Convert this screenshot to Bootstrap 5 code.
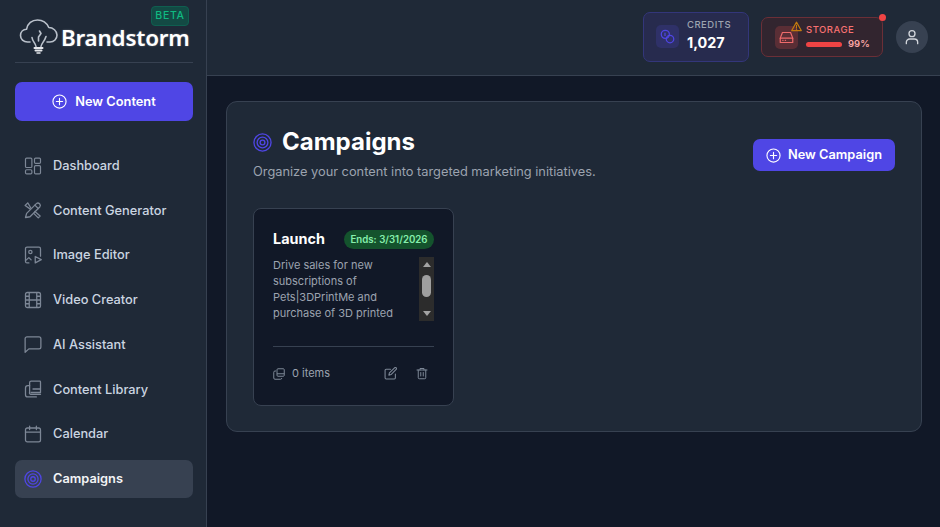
<!DOCTYPE html>
<html lang="en">
<head>
<meta charset="utf-8">
<title>Campaigns</title>
<link href="https://cdn.jsdelivr.net/npm/bootstrap@5.3.0/dist/css/bootstrap.min.css" rel="stylesheet">
<style>
html,body{height:100%;margin:0}
body{background:#111827;font-family:Inter,"Liberation Sans",sans-serif;overflow:hidden}
svg{display:block;flex:none}
.app-shell{height:527px}
.side{width:207px;flex:none;background:#1f2937;border-right:1px solid #374151;padding:0 13px 0 15px}
.brand-box{height:63px;border-bottom:1px solid #374151;position:relative;padding:17px 0 0 4px;color:#fff}
.brand-name{font-family:"Noto Sans","Open Sans",sans-serif;font-weight:600;font-size:22.400px;line-height:28px;letter-spacing:-.2px;margin-left:2px;margin-top:7px;text-shadow:0 0 2px rgba(255,255,255,.35)}
.beta-tag{position:absolute;right:4px;top:6px;width:38px;height:20px;border:1px solid #0f5f50;background:#134a44;color:#10b981;border-radius:4px;font-size:10.500px;font-weight:500;letter-spacing:.7px;line-height:18px;text-align:center}
.cta{background:#4f46e5;color:#fff;border:0;font-weight:600;display:flex;align-items:center;justify-content:center}
.cta:hover{background:#4f46e5;color:#fff}
.cta-side{width:100%;height:39px;margin-top:19px;margin-bottom:25.550px;border-radius:7px;font-size:12.800px;gap:8px}
.side-links{gap:6.720px}
.side-link{height:38px;border-radius:7px;padding:0 10px 0 9px;color:#cbd5e1;font-size:12.800px;font-weight:500;display:flex;align-items:center;gap:11px;text-decoration:none}
.side-link svg{color:#7d8796}
.side-link.on{background:#374151;color:#f3f4f6;font-weight:600}
.side-link.on svg{color:#4f46e5}
.topbar{height:76px;background:#1f2937;border-bottom:1px solid #374151;padding-right:12px;gap:13px}
.stat{display:flex;align-items:center;border-radius:7px}
.stat-credits{width:106px;height:50px;margin-top:-1px;background:#272b4e;border:1px solid #33367a;padding:0 0 2px 12px;gap:8px}
.stat-store{width:122px;height:40px;margin-left:-1px;margin-top:-1px;background:#32252f;border:1px solid #6b2f37;padding-left:13px;gap:8px;position:relative}
.stat-ico{width:23px;height:23px;border-radius:5px;display:flex;align-items:center;justify-content:center}
.stat-credits .stat-ico{background:#2f3168;color:#4f46e5}
.stat-store .stat-ico{background:#5a2e35;color:#ef6b6b}
.stat-label{font-size:9.500px;letter-spacing:.5px;line-height:12px;color:#9ca3af;font-weight:500}
.stat-value{font-size:14.400px;line-height:20px;color:#fff;font-weight:700;margin-top:2px}
.store-label{color:#f87171}
.store-row{gap:6px;margin-top:2px}
.store-bar{width:36px;height:5px;border-radius:3px;background:#ef4444}
.store-pct{font-size:9.500px;line-height:12px;font-weight:600;color:#fca5a5}
.warn-pin{position:absolute;left:29px;top:3px}
.red-dot{position:absolute;right:-4px;top:-4px;width:7px;height:7px;border-radius:50%;background:#ef4444}
.avatar-dot{width:32px;height:32px;border-radius:50%;background:#374151;color:#d1d5db;display:flex;align-items:center;justify-content:center;margin-top:-1px}
.main-pane{padding:25px 18px 0 19px}
.panel{height:331px;background:#1f2937;border:1px solid #374151;border-radius:11px;padding:25px 26px 0}
.page-title{font-size:24px;line-height:30px;font-weight:700;color:#fff;margin:0}
.page-sub{font-size:12.800px;line-height:18px;color:#9ca3af;margin-top:6px}
.cta-page{height:32px;width:142px;margin-top:12px;border-radius:7px;font-size:12.800px;gap:7px}
.camp-card{width:201px;height:198px;margin-top:27px;background:#111827;border:1px solid #374151;border-radius:8px;padding:19px 19px 0}
.camp-name{font-size:14.400px;line-height:22px;font-weight:700;color:#fff}
.ends-tag{height:19px;width:90px;border-radius:10px;background:#14532d;color:#86efac;font-size:9.700px;font-weight:600;line-height:19px;text-align:center}
.camp-desc{height:64px;margin-top:7px;font-size:11px;line-height:16px;color:#9ca3af;width:131px}
.fake-scroll{width:15px;height:64px;margin-top:7px;background:#2c2c2c;position:relative;display:flex;flex-direction:column;align-items:center;justify-content:space-between;padding:5px 0}
.fake-thumb{position:absolute;left:3px;top:18px;width:9px;height:22px;border-radius:5px;background:#9f9f9f}
.tri-up{width:0;height:0;border-left:4.500px solid transparent;border-right:4.500px solid transparent;border-bottom:5px solid #a3a3a3}
.tri-down{width:0;height:0;border-left:4.500px solid transparent;border-right:4.500px solid transparent;border-top:5px solid #a3a3a3}
.card-rule{border-top:1px solid #374151;margin-top:25px}
.camp-foot{height:53px;color:#9ca3af;font-size:11px}
.foot-ico{color:#7d8796}
.foot-left{gap:7px}
.foot-right{gap:19px;padding-right:6px}
.page-head{gap:10px}
</style>
</head>
<body>
<div class="d-flex app-shell">
  <aside class="side d-flex flex-column">
    <div class="brand-box d-flex align-items-start">
      <svg width="40" height="38" viewBox="0 0 40 38" fill="none" stroke="#b9c0ca" stroke-width="1.600" stroke-linecap="round" stroke-linejoin="round"><path d="M11 25H8.500C4.500 25 1.500 22 1.500 18.500C1.500 15 4.200 12.500 7.500 12.300C8.500 6.500 13 3 18.500 3C24 3 28 6.500 29.800 10.500C34 10.500 38 14 38 18C38 22 35 25 31 25H28"/><path d="M17 29.500C16.500 26 13.500 24.500 13 20.500M22 29.500C22.500 26 25.500 24.500 27 19.500M19.500 24V20L22 16.500L20.500 14"/><path d="M15.500 31H23.500M16.500 33.500H22.500" stroke="#e5e7eb" stroke-width="2"/><path d="M18 36H21" stroke="#e5e7eb" stroke-width="1.500"/></svg>
      <span class="brand-name">Brandstorm</span>
      <span class="beta-tag">BETA</span>
    </div>
    <button class="btn cta cta-side" type="button">
      <svg width="15" height="15" viewBox="0 0 24 24" fill="none" stroke="currentColor" stroke-width="1.800" stroke-linecap="round"><circle cx="12" cy="12" r="10.500"/><path d="M12 7v10M7 12h10"/></svg>
      New Content
    </button>
    <nav class="d-flex flex-column side-links">
      <a class="side-link" href="#"><svg width="18" height="18" viewBox="0 0 24 24" fill="none" stroke="currentColor" stroke-width="1.600" stroke-linejoin="round"><rect x="2" y="1.500" width="8.500" height="12.500" rx="1.500"/><rect x="14" y="1.500" width="8" height="7" rx="1.500"/><rect x="2" y="17" width="8.500" height="5.500" rx="1.500"/><rect x="14" y="11.500" width="8" height="11" rx="1.500"/></svg>Dashboard</a>
      <a class="side-link" href="#"><svg width="18" height="18" viewBox="0 0 24 24" fill="none" stroke="currentColor" stroke-width="1.700" stroke-linecap="round" stroke-linejoin="round"><path d="M2 22l1.500-5.500L16.500 3.500a3.200 3.200 0 0 1 4.500 4.500L8 21z"/><path d="M14.500 5.500l4.500 4.500"/><path d="M9 9L5 2.500 1.500 6 8 10.500M14.500 14l7 6-2.500 2.500-6-6"/></svg>Content Generator</a>
      <a class="side-link" href="#"><svg width="18" height="18" viewBox="0 0 24 24" fill="none" stroke="currentColor" stroke-width="1.700" stroke-linecap="round" stroke-linejoin="round"><path d="M6.500 22.500H4a2 2 0 0 1-2-2V3.500a2 2 0 0 1 2-2h16a2 2 0 0 1 2 2v10"/><circle cx="8.500" cy="8" r="2.200"/><path d="M2 19.500l4.500-4 3 3"/><path d="M15 14l8 4.200-8 4.300z"/></svg>Image Editor</a>
      <a class="side-link" href="#"><svg width="18" height="18" viewBox="0 0 24 24" fill="none" stroke="currentColor" stroke-width="1.700" stroke-linejoin="round"><rect x="2" y="2" width="20" height="20" rx="2.500"/><path d="M7 2v20M17 2v20M2 7h5M2 12h20M2 17h5M17 7h5M17 17h5"/></svg>Video Creator</a>
      <a class="side-link" href="#"><svg width="18" height="18" viewBox="0 0 24 24" fill="none" stroke="currentColor" stroke-width="1.700" stroke-linejoin="round"><path d="M1.500 5A2.500 2.500 0 0 1 4 2.500h16A2.500 2.500 0 0 1 22.500 5v11a2.500 2.500 0 0 1-2.500 2.500H6.500l-5 4.500z"/></svg>AI Assistant</a>
      <a class="side-link" href="#"><svg width="18" height="18" viewBox="0 0 24 24" fill="none" stroke="currentColor" stroke-width="1.700" stroke-linecap="round" stroke-linejoin="round"><path d="M7.500 16V3.500a2 2 0 0 1 2-2H21a1 1 0 0 1 1 1V16.500H9.500"/><path d="M12 12h10"/><path d="M7.500 7.500H5a3 3 0 0 0-3 3v9a3 3 0 0 0 3 3h11.500"/><path d="M7.500 16a2 2 0 0 0 2 3H22"/></svg>Content Library</a>
      <a class="side-link" href="#"><svg width="18" height="18" viewBox="0 0 24 24" fill="none" stroke="currentColor" stroke-width="1.700" stroke-linecap="round" stroke-linejoin="round"><rect x="2" y="4" width="20" height="18.500" rx="2.500"/><path d="M2 9.500h20M7.500 1.500V6M16.500 1.500V6"/></svg>Calendar</a>
      <a class="side-link on" href="#"><svg width="18" height="18" viewBox="0 0 24 24" fill="none" stroke="currentColor" stroke-width="1.700"><circle cx="12" cy="12" r="10.800"/><circle cx="12" cy="12" r="6.800"/><circle cx="12" cy="12" r="3"/></svg>Campaigns</a>
    </nav>
  </aside>
  <div class="flex-grow-1 d-flex flex-column">
    <header class="topbar d-flex align-items-center justify-content-end">
      <div class="stat stat-credits">
        <div class="stat-ico"><svg width="15" height="15" viewBox="0 0 24 24" fill="none" stroke="currentColor" stroke-width="2"><circle cx="8.500" cy="8.500" r="6.500"/><circle cx="16" cy="16" r="6"/><path d="M8 6v5"/></svg></div>
        <div><div class="stat-label">CREDITS</div><div class="stat-value">1,027</div></div>
      </div>
      <div class="stat stat-store">
        <svg class="warn-pin" width="11" height="11" viewBox="0 0 24 24" fill="none" stroke="#c27a0e" stroke-width="2.400" stroke-linejoin="round" stroke-linecap="round"><path d="M12 2.500L22.500 21h-21z"/><path d="M12 9v6M12 18v.2"/></svg>
        <div class="stat-ico"><svg width="15" height="15" viewBox="0 0 24 24" fill="none" stroke="currentColor" stroke-width="1.900" stroke-linejoin="round" stroke-linecap="round"><path d="M2 13L5.500 4h13L22 13v7H2z"/><path d="M2 13h20M6 16.500h.5M10 16.500h.5"/></svg></div>
        <div>
          <div class="stat-label store-label">STORAGE</div>
          <div class="d-flex align-items-center store-row"><div class="store-bar"></div><div class="store-pct">99%</div></div>
        </div>
        <span class="red-dot"></span>
      </div>
      <div class="avatar-dot"><svg width="16" height="16" viewBox="0 0 24 24" fill="none" stroke="currentColor" stroke-width="2" stroke-linecap="round"><circle cx="12" cy="7" r="4.500"/><path d="M3.500 22v-2a5 5 0 0 1 5-5h7a5 5 0 0 1 5 5v2"/></svg></div>
    </header>
    <main class="main-pane flex-grow-1">
      <section class="panel">
        <div class="d-flex justify-content-between align-items-start">
          <div>
            <div class="d-flex align-items-center page-head">
              <svg width="19" height="19" viewBox="0 0 24 24" fill="none" stroke="#4f46e5" stroke-width="1.700"><circle cx="12" cy="12" r="10.800"/><circle cx="12" cy="12" r="6.800"/><circle cx="12" cy="12" r="3"/></svg>
              <h1 class="page-title">Campaigns</h1>
            </div>
            <div class="page-sub">Organize your content into targeted marketing initiatives.</div>
          </div>
          <button class="btn cta cta-page" type="button">
            <svg width="15" height="15" viewBox="0 0 24 24" fill="none" stroke="currentColor" stroke-width="1.800" stroke-linecap="round"><circle cx="12" cy="12" r="10.500"/><path d="M12 7v10M7 12h10"/></svg>
            New Campaign
          </button>
        </div>
        <article class="camp-card">
          <div class="d-flex justify-content-between align-items-center">
            <div class="camp-name">Launch</div>
            <div class="ends-tag">Ends: 3/31/2026</div>
          </div>
          <div class="d-flex justify-content-between">
            <div class="camp-desc">Drive sales for new subscriptions of Pets|3DPrintMe and purchase of 3D printed</div>
            <div class="fake-scroll"><span class="tri-up"></span><span class="fake-thumb"></span><span class="tri-down"></span></div>
          </div>
          <div class="card-rule"></div>
          <div class="camp-foot d-flex align-items-center justify-content-between">
            <div class="d-flex align-items-center foot-left">
              <svg class="foot-ico" width="12" height="12" viewBox="0 0 24 24" fill="none" stroke="currentColor" stroke-width="2" stroke-linejoin="round"><rect x="8" y="1.500" width="14.500" height="15" rx="2"/><path d="M8 11.500h14.500"/><path d="M6 6H4a2.500 2.500 0 0 0-2.500 2.500V20a2.500 2.500 0 0 0 2.500 2.500h11a2.500 2.500 0 0 0 2.500-2.500"/></svg>
              <span>0 items</span>
            </div>
            <div class="d-flex align-items-center foot-ico foot-right">
              <svg width="13" height="13" viewBox="0 0 24 24" fill="none" stroke="currentColor" stroke-width="2" stroke-linejoin="round" stroke-linecap="round"><path d="M21 13v7a2 2 0 0 1-2 2H4a2 2 0 0 1-2-2V6a2 2 0 0 1 2-2h8"/><path d="M9 15l1-4L19.500 1.500a2 2 0 0 1 3 3L13 14z"/></svg>
              <svg width="12" height="13" viewBox="0 0 24 24" fill="none" stroke="currentColor" stroke-width="2" stroke-linejoin="round" stroke-linecap="round"><path d="M2 5h20M8 5V2h8v3M4.500 5v15.500A2 2 0 0 0 6.500 22.500h11a2 2 0 0 0 2-2V5M9.500 10v7M14.500 10v7"/></svg>
            </div>
          </div>
        </article>
      </section>
    </main>
  </div>
</div>
</body>
</html>
